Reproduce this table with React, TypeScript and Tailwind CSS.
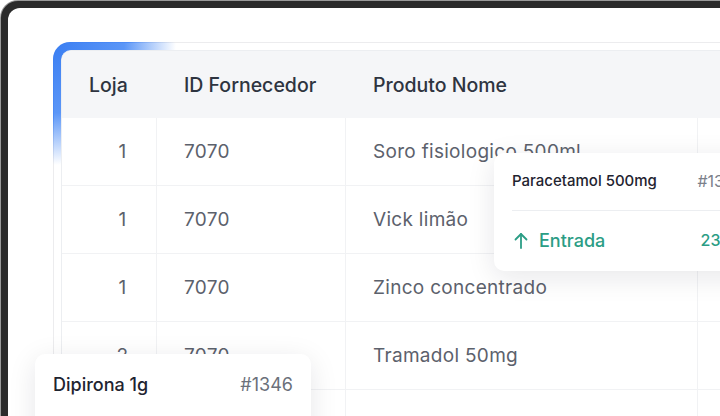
const rows = [
  { loja: "1", id: "7070", nome: "Soro fisiologico 500ml" },
  { loja: "1", id: "7070", nome: "Vick limão" },
  { loja: "1", id: "7070", nome: "Zinco concentrado" },
  { loja: "2", id: "7070", nome: "Tramadol 50mg" },
  { loja: "", id: "", nome: "" },
];

function UpArrow() {
  return (
    <svg width="14" height="17" viewBox="0 0 14 17" fill="none" stroke="currentColor" strokeWidth="1.8" strokeLinecap="round" strokeLinejoin="round" className="ml-[2px]">
      <path d="M7 16V2" />
      <path d="M1.5 7.5L7 2l5.5 5.5" />
    </svg>
  );
}

export default function App() {
  return (
    <div className="relative w-[720px] h-[416px] overflow-hidden bg-white font-['Inter',sans-serif]">
      <div className="w-[800px] h-[520px] rounded-tl-[18px] bg-[#9a9a9a] pl-px pt-px">
        <div className="w-full h-full rounded-tl-[17px] bg-[#2b2b2b] pl-[7px] pt-[7px]">
          <div className="w-full h-full rounded-tl-[12px] bg-white pl-[45px] pt-[34px]">
            <div className="w-[800px] rounded-tl-[17px] p-px bg-[radial-gradient(circle_at_0_0,#3a7ef2_0px,#4d8cf6_75px,#ececee_122px)]">
              <div className="rounded-tl-[16px] pl-[7px] pt-[7px] bg-[radial-gradient(circle_at_0_0,#3a7ef2_0px,#5b96f7_70px,#ffffff_122px)]">
                <div className="rounded-tl-[10px] border-l border-t border-[#eceef1] overflow-hidden bg-white">
                  <div className="flex h-[67px] items-center pt-[3px] bg-[#f5f6f8] text-[19.5px] font-medium text-[#2e3440]">
                    <div className="w-[95px] shrink-0 pl-[27px]">Loja</div>
                    <div className="w-[189px] shrink-0 pl-[27px]">ID Fornecedor</div>
                    <div className="w-[352px] shrink-0 pl-[27px]">Produto Nome</div>
                    <div className="w-[200px] shrink-0" />
                  </div>
                  {rows.map((r, i) => (
                    <div key={i} className="flex h-[68px] border-b border-[#f1f2f4] text-[19px] tracking-[0.3px] text-[#5c616c]">
                      <div className="w-[95px] shrink-0 pl-[27px] pt-[2px] flex items-center justify-center border-r border-[#f1f2f4]">{r.loja}</div>
                      <div className="w-[189px] shrink-0 pl-[27px] pt-[2px] flex items-center border-r border-[#f1f2f4]">{r.id}</div>
                      <div className="w-[352px] shrink-0 pl-[27px] pt-[2px] flex items-center border-r border-[#f1f2f4]">{r.nome}</div>
                      <div className="w-[200px] shrink-0" />
                    </div>
                  ))}
                </div>
              </div>
            </div>
          </div>
        </div>
      </div>

      <div className="absolute left-[494px] top-[153px] w-[268px] rounded-[10px] bg-white px-[18px] pt-[16px] pb-[19px] shadow-[0_6px_28px_rgba(15,23,42,0.10)]">
        <div className="flex h-[24px] items-center justify-between">
          <span className="text-[15px] font-medium text-[#1f2430]">Paracetamol 500mg</span>
          <span className="text-[16px] text-[#7b808a]">#1345</span>
        </div>
        <div className="mt-[17px] mb-[17px] h-px bg-[#eceef1]" />
        <div className="flex h-[24px] items-center justify-between text-[#2b9d85]">
          <span className="flex items-center gap-[11px] text-[18px] font-medium">
            <UpArrow />
            Entrada
          </span>
          <span className="text-[16px] font-medium">23 un</span>
        </div>
      </div>

      <div className="absolute left-[35px] top-[354px] w-[276px] rounded-[10px] bg-white px-[18px] pt-[18px] pb-[18px] shadow-[0_6px_28px_rgba(15,23,42,0.10)]">
        <div className="flex h-[24px] items-center justify-between">
          <span className="text-[18px] font-medium text-[#1f2430]">Dipirona 1g</span>
          <span className="text-[18px] text-[#6b707a]">#1346</span>
        </div>
        <div className="mt-[22px] mb-[17px] h-px bg-[#eceef1]" />
        <div className="flex h-[24px] items-center justify-between text-[#d05a5a]">
          <span className="text-[18px] font-medium">Saída</span>
          <span className="text-[18px] font-medium">12 un</span>
        </div>
      </div>
    </div>
  );
}
